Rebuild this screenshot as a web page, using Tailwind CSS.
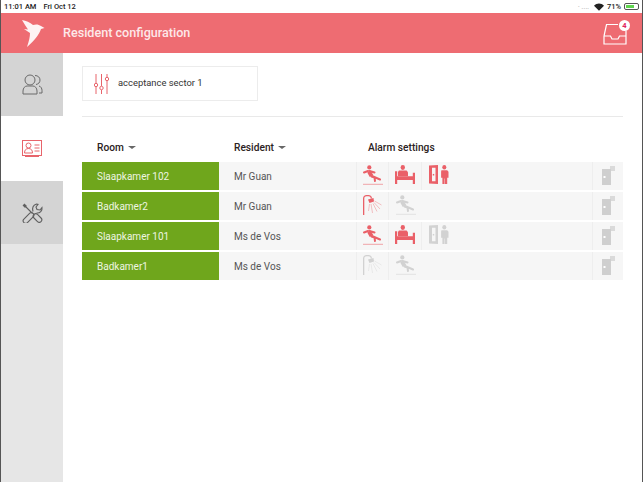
<!DOCTYPE html>
<html lang="en">
<head>
<meta charset="UTF-8">
<title>Resident configuration</title>
<script src="https://cdn.jsdelivr.net/npm/@tailwindcss/browser@4"></script>
</head>
<body class="w-[643px] h-[482px] overflow-hidden bg-white font-['Roboto',sans-serif] flex flex-col border-x border-[#555]">
<svg class="hidden">
  <symbol id="fall" viewBox="0 0 20 20">
    <circle cx="6.300" cy="2.400" r="2.100"/>
    <path d="M6 6.500L8.500 11" stroke="currentColor" stroke-width="4" fill="none"/>
    <path d="M6.500 6l5 1.500M5 6L1 7.500M9 11l8 3.500M8.500 11.500l3 1 .5 3.500" stroke="currentColor" stroke-width="2" fill="none" stroke-linecap="round"/>
    <rect x="0" y="18.800" width="20" height="1" opacity=".55"/>
  </symbol>
  <symbol id="bed" viewBox="0 0 20 17" preserveAspectRatio="none">
    <circle cx="7.800" cy="2.200" r="2.200"/>
    <path d="M4 5h7.600l1.400 1.400V10H3V6z"/>
    <path d="M0 5.500h2.200V10h15.600V7h2.200v10h-2.200v-3.500H2.200V17H0z"/>
  </symbol>
  <symbol id="door" viewBox="0 0 20 17" preserveAspectRatio="none">
    <path fill-rule="evenodd" d="M0 .5L9 0v17l-9-.5zM3 2.500v12h3.500v-12z"/>
    <rect x="3.800" y="8" width="1.400" height="1.400"/>
    <circle cx="15.300" cy="2.100" r="2"/>
    <path d="M12.400 4.800h5.800l1.300 1.300v5.200h-1.300V17h-2.200v-5h-.4v5h-2.200v-5.700h-1.300V6.100z"/>
  </symbol>
  <symbol id="shower" viewBox="0 0 20 20">
    <path d="M0 20V3.500C0 1.500 1.500 0 3.500 0h2C7.500 0 9 1.500 9 3.500H7.700C7.700 2.200 6.800 1.300 5.500 1.300h-2C2.200 1.300 1.300 2.200 1.300 3.500V20z"/>
    <path d="M5 4.500L10.500 3l.5 3.500-4.500 1.500z"/>
    <path d="M6.500 9l-1 7M8 9l1.500 9M10 8.500l4 8M11 7.500l6 6.500M11.500 6l7 4" stroke="currentColor" stroke-width=".7" fill="none" opacity=".55"/>
  </symbol>
  <symbol id="lock" viewBox="0 0 13 19">
    <rect x="0" y="3" width="9" height="16"/>
    <rect x="8" y="0" width="5" height="5" opacity=".7"/>
    <rect x="1.500" y="10" width="2" height="2" fill="#fff"/>
  </symbol>
</svg>

<div class="h-[13px] shrink-0 flex items-center justify-between pl-[3px] pr-[3px] text-[7.500px] font-medium text-[#222]">
  <div class="flex gap-[7px]"><span>11:01 AM</span><span>Fri Oct 12</span></div>
  <div class="flex items-center gap-[3px]">
    <span class="text-[#bbb] tracking-tight mr-[2px]">· ....</span>
    <svg class="w-[10px] h-[8px]" viewBox="0 0 12 9" fill="#222"><path d="M6 9L0 3c3.400-3.400 8.600-3.400 12 0z"/></svg>
    <span>71%</span>
    <div class="w-[15px] h-[7px] border border-[#555] rounded-[2px] p-px"><div class="h-full w-[70%] bg-[#5fd44f]"></div></div>
  </div>
</div>

<header class="h-[40px] shrink-0 bg-[#ee6c72] flex items-center justify-between">
  <div class="flex items-center">
    <svg class="w-[24px] h-[27px] ml-[20px]" viewBox="0 0 24 27" fill="#fff"><path d="M1 0c4 .500 8 2.500 11 5 3-1 6-.500 8 1l3.500 2-3.500 1C18 15 13 21 6 27 8 21 9 17 9 13L3 9l4 .500C5 6.500 3 3.500 1 0z" opacity=".92"/></svg>
    <h1 class="ml-[18px] text-[12.600px] font-medium text-[#fde8e9]">Resident configuration</h1>
  </div>
  <div class="relative mr-[15px] mt-[2px]">
    <svg class="w-[24px] h-[22px]" viewBox="0 0 24 22" fill="none" stroke="#fff" stroke-width="1.200"><path d="M1 13L3.500 1.500H15M23 8v5M1 13h6.500l1.500 3h6l1.500-3H23M1 13v8h22v-8"/></svg>
    <span class="absolute -top-[3px] right-[-3px] w-[11px] h-[11px] rounded-full bg-white text-[#e0245e] text-[7.500px] font-bold flex items-center justify-center">4</span>
  </div>
</header>

<div class="flex-1 flex min-h-0">
  <nav class="w-[62px] shrink-0 bg-[#e6e6e6] flex flex-col">
    <div class="h-[63px] bg-[#d4d4d4] flex items-center justify-center">
      <svg class="w-[21px] h-[21px]" viewBox="0 0 21 21" fill="none" stroke="#6a6a6a" stroke-width="1"><circle cx="8" cy="6" r="5"/><path d="M1 20v-3c0-3 2-5 4-5h6c2 0 4 2 4 5v3zM13 1.500c3 0 5 2 5 4.500s-1.500 4-4 4.500M17 12c2 .500 3 2.500 3 4.500V19h-3"/></svg>
    </div>
    <div class="h-[65px] bg-white flex items-center justify-center">
      <svg class="w-[20px] h-[17px]" viewBox="0 0 20 17" fill="none" stroke="#e8646b" stroke-width="1"><rect x=".5" y=".5" width="19" height="15"/><circle cx="6.500" cy="5.500" r="2.500"/><path d="M2.500 13c0-3 1.500-4.500 4-4.500s4 1.500 4 4.500zM12.500 5h5M12.500 8h5M12.500 11h5M3 16.500h14"/></svg>
    </div>
    <div class="h-[63px] bg-[#d4d4d4] flex items-center justify-center">
      <svg class="w-[21px] h-[20px]" viewBox="0 0 21 20" fill="none" stroke="#5f5f5f" stroke-width="1.100">
        <path d="M1.500 1.500L4 4" stroke-width="2.600"/>
        <path d="M4 4l6.500 6.500"/>
        <rect x="10.500" y="12.500" width="10" height="5" rx="2.500" transform="rotate(45 15.500 15)"/>
        <rect x="0" y="12.500" width="13" height="5" rx="2.500" transform="rotate(-45 6.500 15)"/>
        <path d="M11 8.500C10 5 11.500 2 14.500 1L16 1.300 14 4l1 2.500 3 .500 2-2.500c.5 3-2 6-5.500 5.500"/>
      </svg>
    </div>
  </nav>

  <main class="flex-1 min-w-0 pl-[19px] pr-[19px] pt-[13px]">
    <div class="w-[176px] h-[35px] border border-[#ececec] flex items-center">
      <svg class="w-[15px] h-[20px] ml-[11px]" viewBox="0 0 15 20" fill="none" stroke="#e8646b" stroke-width="1"><path d="M2 0v9M2 13v7M7.500 0v12M7.500 16v4M13 0v3M13 7v13"/><circle cx="2" cy="11" r="1.700"/><circle cx="7.500" cy="14" r="1.700"/><circle cx="13" cy="5" r="1.700"/></svg>
      <span class="ml-[9px] text-[9.400px] text-[#333]">acceptance sector 1</span>
    </div>
    <div class="h-px bg-[#e9e9e9] mt-[15px]"></div>

    <div class="flex h-[45px] items-end pb-[7px] text-[10.200px] font-medium text-[#2b2222]">
      <div class="w-[137px] pl-[15px] flex items-center gap-[4px]">Room <span class="w-0 h-0 border-x-[4px] border-x-transparent border-t-[3px] border-t-[#666]"></span></div>
      <div class="w-[134px] pl-[15px] flex items-center gap-[4px]">Resident <span class="w-0 h-0 border-x-[4px] border-x-transparent border-t-[3px] border-t-[#666]"></span></div>
      <div class="pl-[15px]">Alarm settings</div>
    </div>

    <div class="flex flex-col gap-[2px] text-[10px]">
      <div class="flex h-[28px] bg-[#f6f6f6]">
        <div class="w-[137px] bg-[#6fa61c] text-[#eef5e2] pl-[15px] pt-px flex items-center">Slaapkamer 102</div>
        <div class="w-[137px] pl-[15px] pt-px flex items-center text-[#555]">Mr Guan</div>
        <div class="w-[33px] flex items-center justify-center pb-[2px] border-x border-[#eee] text-[#ea6068]"><svg class="w-[20px] h-[20px]" fill="currentColor"><use href="#fall"/></svg></div>
        <div class="w-[33px] flex items-center justify-center pb-[3px] border-r border-[#eee] text-[#ea6068]"><svg class="w-[20px] h-[19px]" fill="currentColor"><use href="#bed"/></svg></div>
        <div class="w-[33px] flex items-center justify-center pb-[3px] text-[#ea6068]"><svg class="w-[20px] h-[19px]" fill="currentColor"><use href="#door"/></svg></div>
        <div class="ml-auto w-[31px] flex items-center justify-center pb-[2px] border-l border-[#eee] text-[#cfcfcf]"><svg class="w-[13px] h-[19px]" fill="currentColor"><use href="#lock"/></svg></div>
      </div>
      <div class="flex h-[28px] bg-[#f6f6f6]">
        <div class="w-[137px] bg-[#6fa61c] text-[#eef5e2] pl-[15px] pt-px flex items-center">Badkamer2</div>
        <div class="w-[137px] pl-[15px] pt-px flex items-center text-[#555]">Mr Guan</div>
        <div class="w-[33px] flex items-center justify-center pb-[3px] border-x border-[#eee] text-[#ea6068]"><svg class="w-[20px] h-[20px]" fill="currentColor"><use href="#shower"/></svg></div>
        <div class="w-[33px] flex items-center justify-center pb-[2px] text-[#d2d2d2]"><svg class="w-[20px] h-[20px]" fill="currentColor"><use href="#fall"/></svg></div>
        <div class="ml-auto w-[31px] flex items-center justify-center pb-[2px] border-l border-[#eee] text-[#cfcfcf]"><svg class="w-[13px] h-[19px]" fill="currentColor"><use href="#lock"/></svg></div>
      </div>
      <div class="flex h-[28px] bg-[#f6f6f6]">
        <div class="w-[137px] bg-[#6fa61c] text-[#eef5e2] pl-[15px] pt-px flex items-center">Slaapkamer 101</div>
        <div class="w-[137px] pl-[15px] pt-px flex items-center text-[#555]">Ms de Vos</div>
        <div class="w-[33px] flex items-center justify-center pb-[2px] border-x border-[#eee] text-[#ea6068]"><svg class="w-[20px] h-[20px]" fill="currentColor"><use href="#fall"/></svg></div>
        <div class="w-[33px] flex items-center justify-center pb-[3px] border-r border-[#eee] text-[#ea6068]"><svg class="w-[20px] h-[19px]" fill="currentColor"><use href="#bed"/></svg></div>
        <div class="w-[33px] flex items-center justify-center pb-[3px] text-[#d2d2d2]"><svg class="w-[20px] h-[19px]" fill="currentColor"><use href="#door"/></svg></div>
        <div class="ml-auto w-[31px] flex items-center justify-center pb-[2px] border-l border-[#eee] text-[#cfcfcf]"><svg class="w-[13px] h-[19px]" fill="currentColor"><use href="#lock"/></svg></div>
      </div>
      <div class="flex h-[28px] bg-[#f6f6f6]">
        <div class="w-[137px] bg-[#6fa61c] text-[#eef5e2] pl-[15px] pt-px flex items-center">Badkamer1</div>
        <div class="w-[137px] pl-[15px] pt-px flex items-center text-[#555]">Ms de Vos</div>
        <div class="w-[33px] flex items-center justify-center pb-[3px] border-x border-[#eee] text-[#d2d2d2]"><svg class="w-[20px] h-[20px]" fill="currentColor"><use href="#shower"/></svg></div>
        <div class="w-[33px] flex items-center justify-center pb-[2px] text-[#d2d2d2]"><svg class="w-[20px] h-[20px]" fill="currentColor"><use href="#fall"/></svg></div>
        <div class="ml-auto w-[31px] flex items-center justify-center pb-[2px] border-l border-[#eee] text-[#cfcfcf]"><svg class="w-[13px] h-[19px]" fill="currentColor"><use href="#lock"/></svg></div>
      </div>
    </div>
  </main>
</div>
</body>
</html>
